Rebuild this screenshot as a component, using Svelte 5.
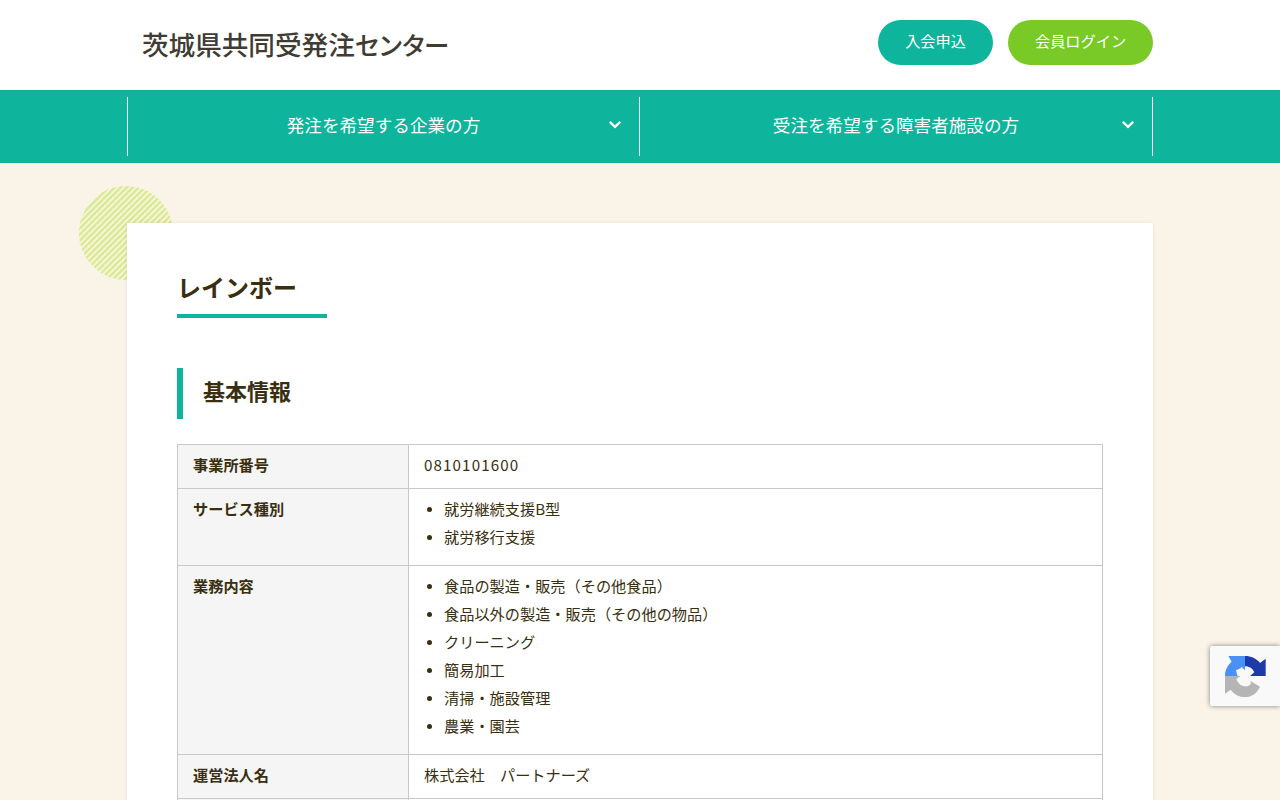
<script>
  const navItems = ['発注を希望する企業の方', '受注を希望する障害者施設の方'];

  const rows = [
    { label: '事業所番号', number: '0810101600' },
    { label: 'サービス種別', list: ['就労継続支援B型', '就労移行支援'] },
    {
      label: '業務内容',
      list: [
        '食品の製造・販売（その他食品）',
        '食品以外の製造・販売（その他の物品）',
        'クリーニング',
        '簡易加工',
        '清掃・施設管理',
        '農業・園芸',
      ],
    },
    { label: '運営法人名', text: '株式会社　パートナーズ' },
    { label: '', text: '' },
  ];
</script>

<div class="page">
  <header class="header">
    <h1 class="logo">茨城県共同受発注<span>センター</span></h1>
    <div class="header-btns">
      <a class="btn join" href="#join">入会申込</a>
      <a class="btn login" href="#login">会員ログイン</a>
    </div>
  </header>

  <nav class="nav">
    <ul>
      {#each navItems as item}
        <li>
          <a href="#nav">{item}</a>
          <svg class="arrow" viewBox="0 0 14 10" width="14" height="10">
            <path d="M1.8 1.8 L7 6.8 L12.2 1.8" fill="none" stroke="#fff" stroke-width="2.3" />
          </svg>
        </li>
      {/each}
    </ul>
  </nav>

  <main class="content">
    <div class="circle"></div>
    <article class="card">
      <h2>レインボー</h2>
      <h3>基本情報</h3>
      <table>
        <tbody>
          {#each rows as row}
            <tr>
              <th>{row.label}</th>
              <td>
                {#if row.list}
                  <ul>
                    {#each row.list as entry}
                      <li>{entry}</li>
                    {/each}
                  </ul>
                {:else if row.number}
                  <span class="number">{row.number}</span>
                {:else}
                  {row.text}
                {/if}
              </td>
            </tr>
          {/each}
        </tbody>
      </table>
    </article>
  </main>

  <!-- reCAPTCHA badge -->
  <div class="recaptcha">
    <svg viewBox="0 0 126 126" width="42" height="42">
      <path fill="#1c3aa9" d="M60 0 C78 0 94 7 105 21 L122 8 V60 H75 L88 49 C83 38 74 31 60 31 Z" />
      <path fill="#4a90f5" d="M10 0 H60 V43 L50 33 C46 37 42 41 33 42 C35 49 35 54 38 60 H0 C0 43 7 28 20 17 Z" />
      <path fill="#b5b5b5" d="M0 60 H46 L34 70 C40 84 49 91 61 91 C70 91 76 88 78 80 C76 77 74 76 76 75 L105 92 C96 112 80 123 60 123 C42 123 28 116 17 101 L0 113 Z" />
    </svg>
  </div>
</div>

<style>
  :global(body) {
    margin: 0;
    overflow: hidden;
  }

  .page {
    height: 800px;
    overflow: hidden;
    background: #faf3e7;
    color: #392f10;
    font-family: "Noto Sans CJK JP", sans-serif;
    font-size: 15.2px;
    line-height: 28px;
  }

  .page * {
    box-sizing: border-box;
  }

  .header {
    display: flex;
    justify-content: space-between;
    height: 90px;
    padding: 0 127px 0 142px;
    background: #fff;
  }

  .logo {
    margin: 0;
    color: #403c33;
    font-size: 26.6px;
    font-weight: 500;
    line-height: 87px;
    white-space: nowrap;
  }

  .logo span {
    font-size: 25.5px;
    letter-spacing: -2.4px;
  }

  .header-btns {
    display: flex;
    gap: 15px;
    padding-top: 20px;
  }

  .btn {
    height: 45px;
    border-radius: 23px;
    color: #fff;
    line-height: 41px;
    text-align: center;
    text-decoration: none;
  }

  .join {
    width: 115px;
    background: #0eb59c;
  }

  .login {
    width: 145px;
    background: #79ca27;
  }

  .nav {
    height: 73px;
    padding: 7px 127px;
    background: #0eb59c;
  }

  .nav ul {
    display: flex;
    margin: 0;
    padding: 0;
    border-left: 1px solid #fff;
    list-style: none;
  }

  .nav li {
    position: relative;
    width: 513px;
    height: 59px;
    border-right: 1px solid #fff;
    text-align: center;
  }

  .nav li:first-child {
    width: 512px;
  }

  .nav a {
    color: #fff;
    font-size: 17.6px;
    line-height: 55px;
    text-decoration: none;
  }

  .arrow {
    position: absolute;
    top: 23px;
    right: 17px;
  }

  .content {
    position: relative;
    padding: 60px 127px 0;
  }

  .circle {
    position: absolute;
    top: 23px;
    left: 79px;
    width: 94px;
    height: 94px;
    border-radius: 50%;
    background: repeating-linear-gradient(135deg, #dbe99f 0, #dbe99f 1.9px, #f6f7d0 2.4px, #f6f7d0 3.75px, #dbe99f 4.24px);
  }

  .card {
    position: relative;
    height: 900px;
    padding: 45px 50px;
    background: #fff;
    box-shadow: 0 0 4px rgba(0, 0, 0, 0.07);
  }

  h2 {
    width: 150px;
    height: 50px;
    margin: 0 0 50px;
    border-bottom: 4px solid #0eb59c;
    font-size: 24px;
    line-height: 37px;
  }

  h3 {
    height: 51px;
    margin: 0 0 25px;
    padding-left: 20px;
    border-left: 6px solid #0eb59c;
    font-size: 22px;
    line-height: 45px;
  }

  table {
    width: 926px;
    border-collapse: collapse;
    table-layout: fixed;
  }

  th,
  td {
    height: 44px;
    padding: 5px 15px 10px;
    border: 1px solid #c8c8c8;
    text-align: left;
    vertical-align: top;
  }

  th {
    width: 231px;
    background: #f5f5f5;
  }

  td ul {
    margin: 0 0 5px;
    padding-left: 20px;
  }

  td li::marker {
    font-family: "Liberation Sans", sans-serif;
    font-size: 17px;
  }

  .number {
    letter-spacing: 1.1px;
  }

  .recaptcha {
    position: absolute;
    top: 646px;
    right: 0;
    width: 70px;
    height: 60px;
    padding: 10px 0 0 15px;
    border-radius: 2px 0 0 2px;
    background: #f9f9f9;
    box-shadow: 0 0 5px #808080;
  }
</style>
